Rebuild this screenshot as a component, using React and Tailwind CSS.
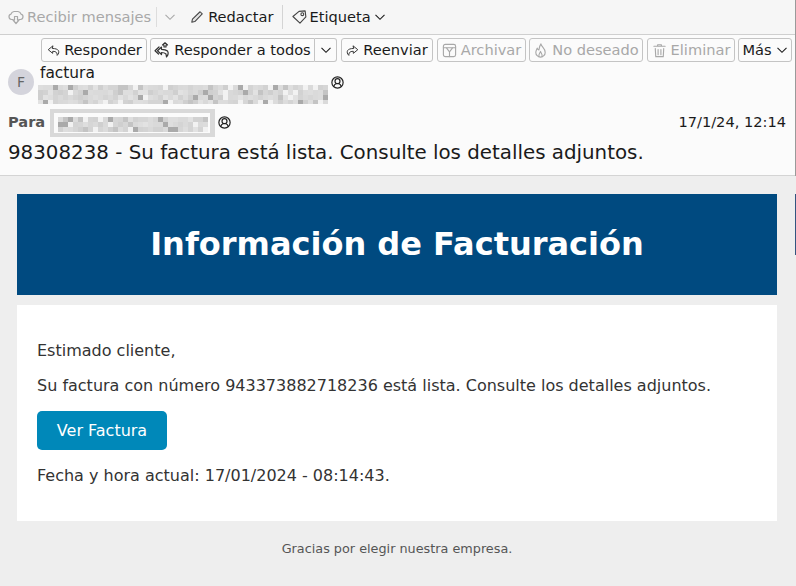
import React from "react";

const FONT = "font-['DejaVu_Sans',sans-serif]";

const Icon = ({ children, className = "", size = 14 }) => (
  <svg
    width={size}
    height={size}
    viewBox="0 0 16 16"
    fill="none"
    stroke="currentColor"
    strokeWidth="1.2"
    strokeLinecap="round"
    strokeLinejoin="round"
    className={`shrink-0 ${className}`}
  >
    {children}
  </svg>
);

const Chevron = ({ className = "" }) => (
  <svg width="12" height="12" viewBox="0 0 12 12" fill="none" stroke="currentColor" strokeWidth="1.1" className={`shrink-0 ${className}`}>
    <path d="M1.5 3.8 6 8.3l4.5-4.5" />
  </svg>
);

const GetIcon = () => (
  <Icon size={16}>
    <path d="M5 10.5H3.5A2.7 2.7 0 0 1 3 5.2 3.5 3.5 0 0 1 6 2.5h4a3.500 3.500 0 0 1 3 2.700 2.700 2.700 0 0 1-.5 5.300H11" />
    <path d="M6.500 7.500v3.500H5l3 3.500 3-3.500H9.500V7.500z" />
  </Icon>
);
const PencilIcon = () => (
  <Icon size={14} className="text-[#444]">
    <path d="M2 14l.8-3.500L11.500 2l2.500 2.500L5.500 13.200z" fill="#e4e4e4" />
  </Icon>
);
const TagIcon = () => (
  <Icon size={15} className="text-[#444]">
    <path d="M1 8 7.500 2.500l6.500-.5.800 6.500L8.500 15z" />
    <circle cx="11" cy="5.500" r="1.500" />
  </Icon>
);
const ReplyIcon = () => (
  <Icon size={13} className="text-[#333]">
    <path d="M7 2.500 1.500 7 7 11.500V9c2.500 0 4 .5 5 2 .5 1 .5 2 .5 3 2-2 2.500-4 1.500-6-1-1.500-3.500-2.500-7-2.500z" />
  </Icon>
);
const ReplyAllIcon = () => (
  <Icon size={16} className="text-[#333]">
    <path d="M7.500 5 3.500 8.700 7.500 12.500v-2c2 0 3.500.5 4.500 1.500l.5 3c2-2.500 2-4.500 1-6-1-1-3-1.700-6-1.700z" />
    <path d="M5 5 1 8.700l3.500 3.300" />
    <path d="M10 5V3H8.500L11 .800 13.500 3H12v2z" />
  </Icon>
);
const ForwardIcon = () => (
  <Icon size={13} className="text-[#333]">
    <path d="M9 2.500 14.500 7 9 11.500V9c-2.500 0-4 .5-5 2-.5 1-.5 2-.5 3-2-2-2.500-4-1.500-6 1-1.500 3.500-2.500 7-2.500z" />
  </Icon>
);
const ArchiveIcon = () => (
  <Icon size={15}>
    <rect x="1.500" y="1.500" width="13" height="13" rx="2" />
    <path d="M1.500 5h13M4.500 5 8 9.500 11.500 5M8 9.500v5" />
  </Icon>
);
const JunkIcon = () => (
  <Icon size={15}>
    <path d="M8.500 1c0 2.500 4.500 4.500 4.500 9A5 5 0 0 1 3 10c0-2 1-3 1.500-4.500.5 1 1 1.500 1.800 2C6.800 5.500 7 3 8.500 1z" />
    <path d="M6.500 14.500c-1.200-2 1-3.500 1.500-5.500.5 2 2.700 3.500 1.500 5.500" />
  </Icon>
);
const TrashIcon = () => (
  <Icon size={15}>
    <path d="M2 3.500h12M6 3.500V1.800h4v1.700M3.500 6l.5 8.500h8l.5-8.500M6.500 7v5.500M9.500 7v5.500" />
  </Icon>
);
const PersonIcon = () => (
  <svg width="13" height="13" viewBox="0 0 12 12" fill="none" stroke="currentColor" strokeWidth="1.100" className="shrink-0 text-[#222]">
    <circle cx="6" cy="6" r="5.200" />
    <circle cx="6" cy="4.800" r="2.300" />
    <path d="M2.600 9.600c.4-1.600 1.400-2.200 2.100-2.400M9.400 9.600c-.4-1.600-1.400-2.200-2.100-2.400" />
  </svg>
);

const GREYS = ["#dcdcdc", "#d6d6d6", "#cfcfcf", "#dedede", "#c4c4c4", "#e2e2e2", "#d2d2d2", "#d9d9d9", "#aaaaaa", "#f2f2f2", "#d4d4d4", "#dadada"];

// redacted address, drawn as a pixel mosaic; inset leaves a pale band between frame and pixels
const Mosaic = ({ width, height, seed, inset = 0, className = "" }) => {
  const cell = 5;
  const cells = [];
  let s = seed;
  for (let y = inset; y < height - inset; y += cell) {
    for (let x = inset; x < width - inset; x += cell) {
      s = (s * 16807) % 2147483647;
      cells.push(<rect key={`${x}-${y}`} x={x} y={y} width={cell} height={cell} fill={GREYS[s % GREYS.length]} />);
    }
  }
  return (
    <svg width={width} height={height} className={`shrink-0 ${className}`} shapeRendering="crispEdges">
      {inset > 0 && <rect width={width} height={height} fill="#d9d9d9" />}
      {inset > 0 && <rect x="4" y="4" width={width - 9} height={height - 8} fill="#fbfbfb" />}
      {cells}
    </svg>
  );
};

const ActionButton = ({ icon, label, disabled, className = "" }) => (
  <button
    className={`h-6 flex items-center justify-center gap-[4px] rounded-[3px] border border-[#c4c4c4] bg-[#fbfbfb] ${disabled ? "text-[#a8a8a8]" : "text-[#1a1a1a]"} ${className}`}
  >
    {icon}
    <span>{label}</span>
  </button>
);

export default function App() {
  return (
    <div className={`${FONT} w-[796px] h-[586px] overflow-hidden flex bg-[#eeeeee] text-[14.6px] text-[#1a1a1a]`}>
      <div className="w-[795px] shrink-0 flex flex-col">
        <div className="h-[35px] shrink-0 flex items-center pl-[8px] bg-[#f6f6f6] border-b border-[#cfcfcf]">
          <div className="flex items-center gap-[3px] text-[#a8a8a8]">
            <GetIcon />
            <span>Recibir mensajes</span>
          </div>
          <div className="w-px h-5 bg-[#dddddd] ml-[5px]" />
          <Chevron className="ml-[7px] text-[#a8a8a8]" />
          <div className="flex items-center gap-[4px] ml-[14px]">
            <PencilIcon />
            <span>Redactar</span>
          </div>
          <div className="w-px h-6 bg-[#d4d4d4] ml-[9px]" />
          <div className="flex items-center gap-[2px] ml-[9px]">
            <TagIcon />
            <span>Etiqueta</span>
            <Chevron className="ml-px" />
          </div>
        </div>

        <div className="h-[141px] shrink-0 bg-[#fbfbfb] border-b border-[#d4d4d4] flex flex-col">
          <div className="flex items-center pl-[41px] pt-[3px] gap-[3px]">
            <ActionButton icon={<ReplyIcon />} label="Responder" className="w-[106px] pl-px" />
            <div className="flex">
              <ActionButton icon={<ReplyAllIcon />} label="Responder a todos" className="w-[165px] rounded-r-none" />
              <button className="h-6 w-[22px] flex items-center justify-center border border-l-0 border-[#c4c4c4] rounded-r-[3px]">
                <Chevron />
              </button>
            </div>
            <ActionButton icon={<ForwardIcon />} label="Reenviar" className="w-[92px] ml-px" />
            <ActionButton icon={<ArchiveIcon />} label="Archivar" disabled className="w-[89px] ml-px" />
            <ActionButton icon={<JunkIcon />} label="No deseado" disabled className="w-[114px]" />
            <ActionButton icon={<TrashIcon />} label="Eliminar" disabled className="w-[88px] ml-px" />
            <ActionButton icon={<Chevron />} label="Más" className="w-[54px] flex-row-reverse" />
          </div>

          <div className="flex pl-[8px]">
            <div className="w-[26px] h-[26px] mt-[7px] rounded-full bg-[#d4d4dc] flex items-center justify-center text-[#666] text-sm">F</div>
            <div className="ml-[6px] flex flex-col">
              <span className="text-[15.4px] leading-[20px] mt-px">factura</span>
              <Mosaic width={290} height={19} seed={12345} className="-ml-[2px] mt-[2px]" />
            </div>
            <div className="ml-[3px] mt-[14px]">
              <PersonIcon />
            </div>
          </div>

          <div className="flex items-center pl-[8px] pr-[9px] mt-[5px] h-[28px]">
            <span className="font-bold text-[#555] -mt-[2px]">Para</span>
            <Mosaic width={165} height={28} seed={98765} inset={8} className="ml-[5px]" />
            <div className="ml-[3px] -mt-[2px]">
              <PersonIcon />
            </div>
            <span className="ml-auto -mt-[2px]">17/1/24, 12:14</span>
          </div>

          <div className="pl-[8px] text-[19.83px] leading-[28px] mt-[2px]">98308238 - Su factura está lista. Consulte los detalles adjuntos.</div>
        </div>

        <div className="pl-[17px] pr-[18px] pt-[18px] flex flex-col">
          <div className="h-[101px] bg-[#004a80] flex items-center justify-center pb-[2px]">
            <h1 className="text-[32px] font-bold text-white">Información de Facturación</h1>
          </div>
          <div className="h-[216px] mt-[10px] bg-white px-5 pt-[36px] text-base text-[#333]">
            <p className="leading-[20px]">Estimado cliente,</p>
            <p className="leading-[20px] mt-[15px]">Su factura con número 943373882718236 está lista. Consulte los detalles adjuntos.</p>
            <button className="block w-[130px] h-[39px] mt-[15px] rounded-[5px] bg-[#0088b9] text-white text-base">Ver Factura</button>
            <p className="leading-[20px] mt-[15px] pt-px">Fecha y hora actual: 17/01/2024 - 08:14:43.</p>
          </div>
          <p className="text-center text-[12.8px] text-[#555] mt-[18px]">Gracias por elegir nuestra empresa.</p>
        </div>
      </div>

      <div className="w-px flex flex-col">
        <div className="h-[176px] bg-[#9a9a9a]" />
        <div className="h-[18px]" />
        <div className="h-[61px] bg-[#33557f]" />
      </div>
    </div>
  );
}
